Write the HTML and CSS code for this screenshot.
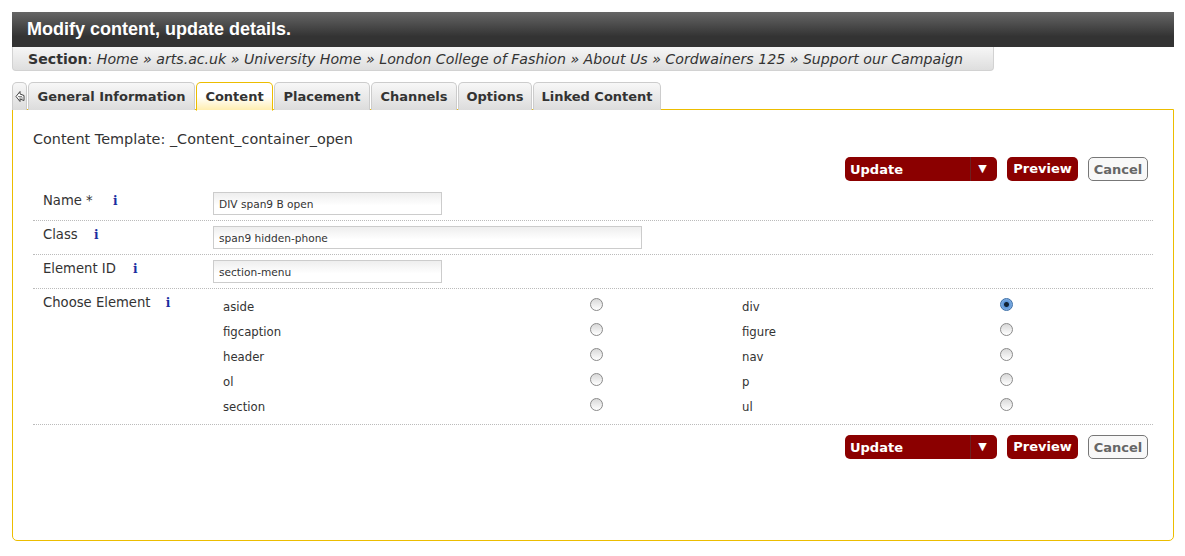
FILE: index.html
```html
<!DOCTYPE html>
<html lang="en">
<head>
  <meta charset="UTF-8">
  <title>Modify content</title>
  <link rel="stylesheet" href="styles.css">
</head>
<body>
<div class="page">
  <h1 class="title">Modify content, update details.</h1>
  <div class="section-bar"><b>Section</b>: <i>Home » arts.ac.uk » University Home » London College of Fashion » About Us » Cordwainers 125 » Support our Campaign</i></div>

  <div class="tabs">
    <span class="tab tab-back">
      <svg width="10" height="13" viewBox="0 0 10 13"><path d="M5 1.5 L1 6.5 L5 11.5 V9 L9 10.5 V5.5 L5 4 Z" fill="#fff" stroke="#444" stroke-width="1"/><path d="M3 6.5 H7 M4 8 H8" stroke="#888" stroke-width="1"/></svg>
    </span>
    <span class="tab tab-general">General Information</span>
    <span class="tab tab-active">Content</span>
    <span class="tab tab-placement">Placement</span>
    <span class="tab tab-channels">Channels</span>
    <span class="tab tab-options">Options</span>
    <span class="tab tab-linked">Linked Content</span>
  </div>

  <div class="panel">
    <p class="template">Content Template: _Content_container_open</p>

    <div class="actions actions-top">
      <span class="btn btn-update"><span class="btn-update-label">Update</span><span class="btn-arrow">▼</span></span>
      <span class="btn btn-preview">Preview</span>
      <span class="btn btn-cancel">Cancel</span>
    </div>

    <div class="row row-name">
      <div class="row-label">Name * <span class="info info-name">i</span></div>
      <div class="row-field"><input class="text-input" type="text" value="DIV span9 B open"></div>
    </div>
    <div class="row">
      <div class="row-label">Class <span class="info info-class">i</span></div>
      <div class="row-field"><input class="text-input text-input-wide" type="text" value="span9 hidden-phone"></div>
    </div>
    <div class="row">
      <div class="row-label">Element ID <span class="info info-id">i</span></div>
      <div class="row-field"><input class="text-input" type="text" value="section-menu"></div>
    </div>
    <div class="row row-choose">
      <div class="row-label">Choose Element <span class="info info-choose">i</span></div>
      <div class="choices">
        <span class="choice">aside</span><span class="radio"></span><span class="choice">div</span><span class="radio radio-on"></span>
        <span class="choice">figcaption</span><span class="radio"></span><span class="choice">figure</span><span class="radio"></span>
        <span class="choice">header</span><span class="radio"></span><span class="choice">nav</span><span class="radio"></span>
        <span class="choice">ol</span><span class="radio"></span><span class="choice">p</span><span class="radio"></span>
        <span class="choice">section</span><span class="radio"></span><span class="choice">ul</span><span class="radio"></span>
      </div>
    </div>

    <div class="actions actions-bottom">
      <span class="btn btn-update"><span class="btn-update-label">Update</span><span class="btn-arrow">▼</span></span>
      <span class="btn btn-preview">Preview</span>
      <span class="btn btn-cancel">Cancel</span>
    </div>
  </div>
</div>
</body>
</html>
```

FILE: styles.css
```css
* {
  box-sizing: border-box;
}

body {
  margin: 0;
  background: #fff;
  font-family: "DejaVu Sans", Verdana, sans-serif;
  color: #333;
}

.page {
  padding: 12px 11px 0 12px;
}

.title {
  margin: 0;
  height: 35px;
  padding-left: 15px;
  font-family: "Liberation Sans", Arial, sans-serif;
  font-size: 18px;
  font-weight: bold;
  line-height: 35px;
  color: #fff;
  background: linear-gradient(#666, #333 70%);
}

.section-bar {
  width: 982px;
  height: 24px;
  padding-left: 15px;
  font-size: 14.15px;
  line-height: 24px;
  white-space: nowrap;
  color: #333;
  background: linear-gradient(#f6f6f6, #dedede);
  border: 1px solid #d2d2d2;
  border-top: 0;
  border-radius: 0 0 4px 4px;
}

.tabs {
  display: flex;
  height: 28px;
  margin-top: 11px;
  align-items: flex-end;
}

.tab {
  height: 28px;
  margin-right: 1px;
  text-align: center;
  font-size: 13px;
  font-weight: bold;
  line-height: 27px;
  white-space: nowrap;
  color: #333;
  background: linear-gradient(#f7f7f7, #dcdcdc);
  border: 1px solid #ccc;
  border-bottom: 0;
  border-radius: 5px 5px 0 0;
}

.tab-back {
  width: 15px;
  display: flex;
  align-items: center;
  justify-content: center;
}

.tab-general { width: 167px; }
.tab-placement { width: 96px; }
.tab-channels { width: 86px; }
.tab-options { width: 74px; }
.tab-linked { width: 128px; }

.tab-active {
  width: 77px;
  position: relative;
  height: 29px;
  margin-bottom: -1px;
  background: linear-gradient(#fff 50%, #ffeeb0);
  border-color: #ecbd00;
  border-bottom: 1px solid transparent;
  z-index: 1;
  background-clip: padding-box;
}

.panel {
  height: 432px;
  margin-top: -1px;
  padding: 0 20px;
  border: 1px solid #ecbd00;
  border-radius: 0 0 5px 5px;
}

.template {
  margin: 0;
  padding-top: 20px;
  font-size: 14.4px;
  line-height: 18px;
}

.actions {
  display: flex;
  justify-content: flex-end;
  gap: 10px;
  padding-right: 5px;
}

.actions-top {
  margin-top: 9px;
  height: 25px;
}

.actions-bottom {
  margin-top: 10px;
}

.btn {
  height: 24px;
  border-radius: 5px;
  font-size: 13px;
  font-weight: bold;
  line-height: 25px;
}

.btn-update {
  width: 152px;
  display: flex;
  color: #fff;
  background: #8b0000;
}

.btn-update-label {
  flex: 1;
  padding-left: 5px;
}

.btn-arrow {
  width: 27px;
  padding-right: 3px;
  text-align: center;
  font-size: 11px;
  line-height: 23px;
  border-left: 1px solid #6e2020;
}

.btn-preview {
  width: 71px;
  text-align: center;
  color: #fff;
  background: #8b0000;
  line-height: 23px;
}

.btn-cancel {
  width: 60px;
  text-align: center;
  color: #666;
  background: #f8f8f8;
  border: 1px solid #777;
  line-height: 23px;
}

.row {
  display: flex;
  height: 34px;
  border-bottom: 1px dotted #bbb;
}

.row-name {
  height: 37px;
  margin-top: 2px;
}

.row-label {
  width: 180px;
  padding: 6px 0 0 10px;
  font-size: 13.2px;
  line-height: 16px;
  white-space: nowrap;
}

.row-name .row-label { padding-top: 9px; }

.row-field {
  padding-top: 5px;
}

.row-name .row-field { padding-top: 8px; }

.info {
  margin-left: 16px;
  font-family: "DejaVu Serif", serif;
  font-size: 12px;
  font-weight: bold;
  color: #1a2ea0;
}

.info-class { margin-left: 12px; }
.info-id { margin-left: 13px; }
.info-choose { margin-left: 11px; }

.text-input {
  display: block;
  width: 229px;
  height: 23px;
  padding: 1px 5px 0;
  font-family: "DejaVu Sans", Verdana, sans-serif;
  font-size: 10.6px;
  color: #333;
  background: linear-gradient(#eee, #fff 60%);
  border: 1px solid #ccc;
  border-radius: 0;
  outline: none;
}

.text-input-wide {
  width: 429px;
}

.row-choose {
  height: 136px;
}

.choices {
  flex: 1;
  display: grid;
  grid-template-columns: 377px 142px 268px 1fr;
  grid-auto-rows: 25px;
  padding-top: 5px;
}

.choice {
  padding-left: 10px;
  font-size: 11.7px;
  line-height: 27px;
  color: #333;
}

.radio {
  width: 13px;
  height: 13px;
  margin-top: 4px;
  border-radius: 50%;
  border: 1px solid #8a8a8a;
  background: linear-gradient(#d8d8d8, #fff);
}

.radio-on {
  border-color: #3a6ea8;
  background: radial-gradient(circle, #123 0 2px, #5a94d8 3px, #a8c8ea);
}
```
